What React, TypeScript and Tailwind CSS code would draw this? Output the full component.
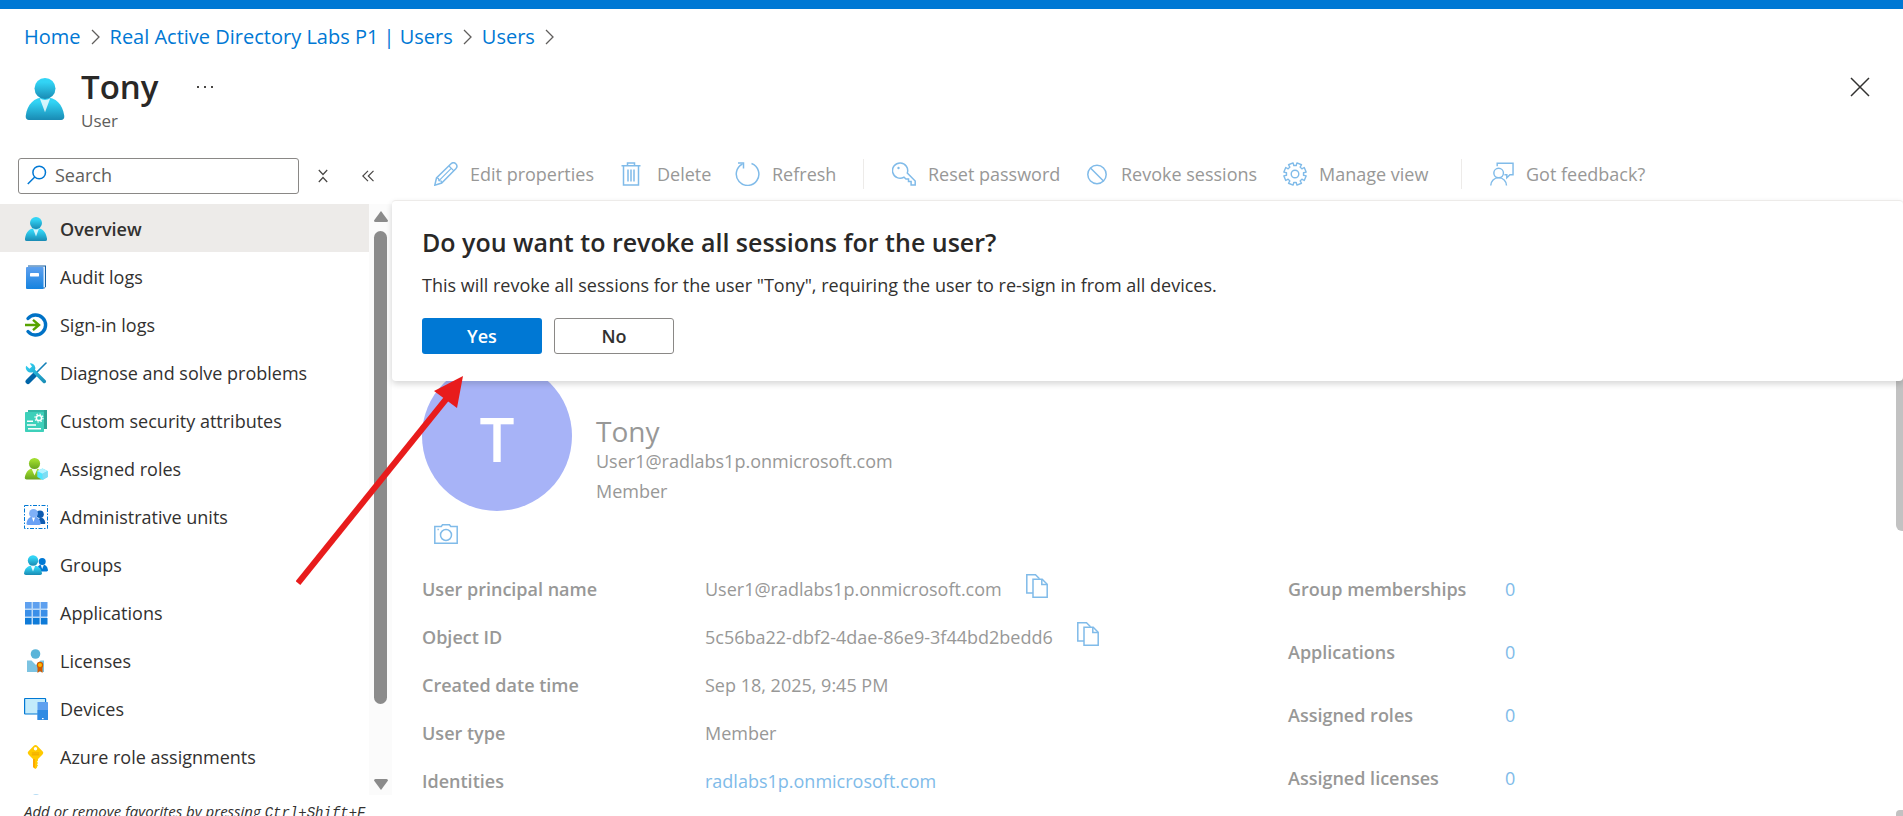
import React from "react";

const BLUE = "#0078d4";

type IconProps = { className?: string };

function PersonIcon({ className }: IconProps) {
  return (
    <svg viewBox="0 0 24 24" className={className} aria-hidden="true">
      <defs>
        <linearGradient id="personHead" x1="0" y1="0" x2="0" y2="1">
          <stop offset="0.2" stopColor="#32d4f5" />
          <stop offset="1" stopColor="#198ab3" />
        </linearGradient>
        <linearGradient id="personBody" x1="0" y1="0" x2="0" y2="1">
          <stop offset="0.2" stopColor="#32d4f5" />
          <stop offset="1" stopColor="#198ab3" />
        </linearGradient>
      </defs>
      <path d="M21.200 24a1.800 1.800 0 0 0 1.800-2v-.5C22 15 18.400 11 12 11S2 15 1 21.500v.5a1.800 1.800 0 0 0 1.800 2z" fill="url(#personBody)" />
      <path d="M12 12.500a6 6 0 0 1-3-.9L12 19.600l3-8a6 6 0 0 1-3 .9z" fill="#fff" opacity="0.8" />
      <circle cx="12" cy="6" r="6" fill="url(#personHead)" />
    </svg>
  );
}

function BookIcon() {
  return (
    <svg viewBox="0 0 24 24" className="size-6" aria-hidden="true">
      <defs>
        <linearGradient id="book" x1="0" y1="0" x2="0" y2="1">
          <stop offset="0" stopColor="#5ea0ef" />
          <stop offset="1" stopColor="#1583df" />
        </linearGradient>
      </defs>
      <path d="M4 .5h18v21l-1.500 2H4z" fill="#155ea1" />
      <path d="M4 1.500h17v21H4z" fill="#e3effa" />
      <rect x="2" y="2" width="17.500" height="22" rx="1" fill="url(#book)" />
      <rect x="6" y="8" width="9" height="3.500" rx=".4" fill="#fff" />
    </svg>
  );
}

function SignInIcon() {
  return (
    <svg viewBox="0 0 24 24" className="size-6" fill="none" aria-hidden="true">
      <path d="M4 5.500A10 10 0 1 1 4 18.500" stroke="#0072c6" strokeWidth="3.400" strokeLinecap="round" />
      <path d="M1 12h14M9 6.800l6 5.200-6 5.200" stroke="#57a300" strokeWidth="2.400" />
    </svg>
  );
}

function ToolsIcon() {
  return (
    <svg viewBox="0 0 24 24" className="size-6" fill="none" aria-hidden="true">
      <defs>
        <linearGradient id="wrench" x1="0" y1="0" x2="1" y2="1">
          <stop offset="0" stopColor="#32d4f5" />
          <stop offset="1" stopColor="#198ab3" />
        </linearGradient>
      </defs>
      <path d="M22 2 11 13" stroke="#1480b8" strokeWidth="1.600" strokeLinecap="round" />
      <path d="M11 13.500 4 20.500" stroke="#0065a8" strokeWidth="5" strokeLinecap="round" />
      <path d="M7 2.200a5 5 0 0 1 4 6.600l10.600 10.400c1.600 1.600-.9 4.200-2.600 2.600L8.600 11.200A5 5 0 0 1 1.800 6l.4-1.200 3.300 3 2.500-2.300L5.800 2.400z" fill="url(#wrench)" />
    </svg>
  );
}

function AttributesIcon() {
  return (
    <svg viewBox="0 0 24 24" className="size-6" aria-hidden="true">
      <path d="M4 1h19v19h-3L4 4z" fill="#2fa593" />
      <path d="M4 1h16v4H4z" fill="#34b8a6" />
      <rect x="1" y="3" width="19" height="20" rx=".8" fill="#3dd0ba" />
      <g fill="none" stroke="#fff">
        <circle cx="15" cy="9" r="2.600" strokeWidth="1.500" />
        <circle cx="15" cy="9" r="4" strokeWidth="1.200" strokeDasharray="1.400 1.740" />
        <path d="M3 12.200h6M3 16h9M4 19.800h13" strokeWidth="1.500" />
      </g>
    </svg>
  );
}

function RolesIcon() {
  return (
    <svg viewBox="0 0 24 24" className="size-6" aria-hidden="true">
      <defs>
        <linearGradient id="role" x1="0" y1="0" x2="0" y2="1">
          <stop offset="0.2" stopColor="#9fdb2e" />
          <stop offset="1" stopColor="#68a41f" />
        </linearGradient>
      </defs>
      <path d="M17 22.500c1 0 2-1 1.800-2C18 14.500 15.300 11 10.300 11S2 14.500.8 20.500c-.2 1 .7 2 1.900 2z" fill="url(#role)" />
      <path d="m7.300 11 3.200 7.500 3.200-7.500z" fill="#fff" opacity="0.9" />
      <circle cx="10.500" cy="6.500" r="5.600" fill="url(#role)" />
      <path d="m18.500 11.500 5.200 2.600v6l-5.200 3-5.200-3v-6z" fill="#50e6ff" />
      <path d="m18.500 11.500 5.200 2.600-5.200 2.700-5.200-2.700z" fill="#b5f3ff" />
      <path d="m18.500 16.800 5.200-2.700v6l-5.200 3z" fill="#7fdcf2" />
    </svg>
  );
}

function AdminUnitsIcon() {
  return (
    <svg viewBox="0 0 24 24" className="size-6" aria-hidden="true">
      <rect x=".5" y=".5" width="23" height="23" fill="none" stroke={BLUE} strokeDasharray="4 1.500 1.500 1.500" />
      <circle cx="16" cy="9.200" r="3.800" fill="#0f5cb0" />
      <path d="M12 19h8.200c1 0 1.300-.7 1.100-1.500-.6-3.500-2.300-5-5.300-5z" fill="#0f5cb0" />
      <path d="M3.800 20c-1 0-1.500-.8-1.300-1.700C3.200 14 5.500 11.500 9.500 11.500s6.500 2.500 7.200 6.800c.2 1-.4 1.700-1.300 1.700z" fill="#6aa2f5" />
      <path d="m7.800 12 1.700 5 1.700-5z" fill="#fff" />
      <circle cx="9.500" cy="8.400" r="4.400" fill="#7fb0f7" />
    </svg>
  );
}

function GroupsIcon() {
  return (
    <svg viewBox="0 0 24 24" className="size-6" aria-hidden="true">
      <defs>
        <linearGradient id="group" x1="0" y1="0" x2="0" y2="1">
          <stop offset="0.2" stopColor="#32d4f5" />
          <stop offset="1" stopColor="#198ab3" />
        </linearGradient>
      </defs>
      <path d="M14 18.500h8.700c.8 0 1.400-.7 1.300-1.500-.6-3.700-2.500-5.500-6-5.500-2.500 0-4 1.500-4.500 3.500z" fill={BLUE} />
      <path d="m16.500 11.500 1.700 4.500 1.800-4.500z" fill="#fff" opacity="0.9" />
      <circle cx="18.200" cy="8.500" r="3.500" fill={BLUE} />
      <path d="M1.800 22C.7 22-.1 21.200 0 20.200.9 15 4 12.500 9 12.500s8.100 2.500 9 7.700c.1 1-.7 1.800-1.800 1.800z" fill="url(#group)" />
      <path d="M6.500 12 9 18.500l2.500-6.500z" fill="#fff" opacity="0.9" />
      <circle cx="9" cy="7.500" r="5.200" fill="url(#group)" />
    </svg>
  );
}

function AppsIcon() {
  const rows = [
    ["#5ea0ef", 1],
    ["#3b8fe8", 9],
    ["#0f7bd8", 17],
  ] as const;
  return (
    <svg viewBox="0 0 24 24" className="size-6" aria-hidden="true">
      <rect x="1" y="1" width="22" height="22" fill="#b9d8f7" />
      {rows.map(([fill, y]) =>
        [1, 9, 17].map((x) => <rect key={`${x}-${y}`} x={x} y={y} width="6.500" height="6.500" fill={fill} />)
      )}
    </svg>
  );
}

function LicensesIcon() {
  return (
    <svg viewBox="0 0 24 24" className="size-6" aria-hidden="true">
      <path d="M3 11.500h4.500L12 16l4.500-4.500H20V23H3z" fill="#7cc3e1" />
      <circle cx="11.500" cy="5" r="4.800" fill="#59b4d9" />
      <path d="M13.500 17h5v7L16 22l-2.500 2z" fill="#d15a00" />
      <circle cx="16" cy="16" r="3.200" fill="#d15a00" />
      <circle cx="16" cy="16" r="2" fill="#ffb700" />
    </svg>
  );
}

function DevicesIcon() {
  return (
    <svg viewBox="0 0 24 24" className="size-6" aria-hidden="true">
      <rect x=".6" y="1.500" width="21" height="15.500" rx=".5" fill="#c3ebfb" stroke={BLUE} strokeWidth="1.200" />
      <rect x="13.500" y="5" width="10.500" height="18" rx=".6" fill="#5ea0ef" />
      <path d="M13.500 13H24v9.400a.6.6 0 0 1-.6.6h-9.300a.6.6 0 0 1-.6-.6z" fill="#2f8be3" />
      <rect x="18" y="21" width="1.600" height="1.200" fill="#fff" />
    </svg>
  );
}

function GoldKeyIcon() {
  return (
    <svg viewBox="0 0 24 24" className="size-6" aria-hidden="true">
      <path d="M11.500 0c.7 0 1.200.3 1.700.8l5.300 5.400c1 1 1 2.200 0 3.200L14 14v1.500l-1 1.200 1 1.300-1 1.300 1 1.200-1 1.300v.7L11.500 24 9 22v-8L4.500 9.400c-1-1-1-2.200 0-3.200L9.800.8c.5-.5 1-.8 1.700-.8z" fill="#ffca00" />
      <path d="M9 14h2v9.500L9 22z" fill="#ffa800" />
      <circle cx="11.500" cy="3.700" r="1.700" fill="#fff" />
      <path d="M7.800 8h7.500M7.800 9.800h7.500" stroke="#e89e00" strokeWidth=".8" />
    </svg>
  );
}

function PencilIcon() {
  return (
    <svg viewBox="0 0 24 24" className="size-6" fill="none" stroke="currentColor" strokeWidth="1.500" aria-hidden="true">
      <path d="M.8 23.200 2.500 16 17 1.800a3.100 3.100 0 0 1 4.800 0c1.400 1.400 1.400 3.400 0 4.900L7.700 21z" />
      <path d="m15 4 4.900 4.900M2.500 16l2 .5.400 2.300 2.300.2.500 2M17 6.700 5 18.700" strokeWidth="1.200" />
    </svg>
  );
}

function TrashIcon() {
  return (
    <svg viewBox="0 0 24 24" className="size-6" fill="none" stroke="currentColor" strokeWidth="1.500" aria-hidden="true">
      <path d="M.5 3.800h19M6.500 3.500V1h7v2.500M2.500 4v19h15V4M7 7.500v12M10 7.500v12M13 7.500v12" />
    </svg>
  );
}

function RefreshIcon() {
  return (
    <svg viewBox="0 0 25 24" className="h-6 w-[25px]" fill="none" stroke="currentColor" strokeWidth="1.500" aria-hidden="true">
      <path d="M16.500 1.500A11.300 11.300 0 1 1 7.500 2" />
      <path d="M3 .9h5.500v5.600" />
    </svg>
  );
}

function KeyIcon() {
  return (
    <svg viewBox="0 0 24 24" className="size-6" fill="none" stroke="currentColor" strokeWidth="1.500" aria-hidden="true">
      <path d="M15.300 11A7.600 7.600 0 1 0 12 15.100l2 2h2.500v2.500h2.600V23h4.100v-4z" />
      <circle cx="6.500" cy="6" r="1.200" fill="currentColor" stroke="none" />
    </svg>
  );
}

function BlockIcon() {
  return (
    <svg viewBox="0 0 24 24" className="size-6" fill="none" stroke="currentColor" strokeWidth="1.500" aria-hidden="true">
      <circle cx="12" cy="12.500" r="9.200" />
      <path d="m5.500 6 13 13" />
    </svg>
  );
}

function GearIcon() {
  const teeth = 8;
  const pts: string[] = [];
  for (let i = 0; i < teeth; i++) {
    const base = ((i + 0.5) * 2 * Math.PI) / teeth - Math.PI / 2;
    (
      [
        [-0.25, 8.6],
        [-0.22, 11.3],
        [0.22, 11.3],
        [0.25, 8.6],
      ] as const
    ).forEach(([a, r]) => pts.push(`${(12 + r * Math.cos(base + a)).toFixed(2)},${(12 + r * Math.sin(base + a)).toFixed(2)}`));
  }
  return (
    <svg viewBox="0 0 24 24" className="size-6" fill="none" stroke="currentColor" strokeWidth="1.400" strokeLinejoin="round" aria-hidden="true">
      <polygon points={pts.join(" ")} />
      <circle cx="12" cy="12" r="3.800" />
    </svg>
  );
}

function FeedbackIcon() {
  return (
    <svg viewBox="0 0 25 24" className="h-6 w-6" fill="none" stroke="currentColor" strokeWidth="1.500" aria-hidden="true">
      <path d="M7.500 4V.8H24v12h-3.200L17.500 16v-3.200H15" />
      <circle cx="9" cy="11" r="5" />
      <path d="M.8 24a8.200 8.200 0 0 1 16.400 0" />
    </svg>
  );
}

function CopyIcon() {
  return (
    <svg viewBox="0 0 22 24" className="h-6 w-[22px]" fill="none" stroke="currentColor" strokeWidth="1.500" aria-hidden="true">
      <path d="M7 19H.8V.8h8.700l4 4" />
      <path d="M7 5.300h9.200l5 5V23.200H7z" />
      <path d="M15.800 5.500v5h5.200" />
    </svg>
  );
}

function CameraIcon() {
  return (
    <svg viewBox="0 0 24 20" className="h-5 w-6" fill="none" stroke="currentColor" strokeWidth="1.500" aria-hidden="true">
      <path d="M.8 19.200V2.500h6.500L8.500.8h7l1.200 1.700h6.500v16.700z" />
      <circle cx="12" cy="11" r="5.500" />
      <path d="M3.500 5.500h1.300" />
    </svg>
  );
}

function Chevron() {
  return (
    <svg viewBox="0 0 9 16" className="h-4 w-[9px]" fill="none" stroke="#605e5c" strokeWidth="1.300" aria-hidden="true">
      <path d="m1 1 7 7-7 7" />
    </svg>
  );
}

const menu = [
  { label: "Overview", icon: <PersonIcon className="size-6" /> },
  { label: "Audit logs", icon: <BookIcon /> },
  { label: "Sign-in logs", icon: <SignInIcon /> },
  { label: "Diagnose and solve problems", icon: <ToolsIcon /> },
  { label: "Custom security attributes", icon: <AttributesIcon /> },
  { label: "Assigned roles", icon: <RolesIcon /> },
  { label: "Administrative units", icon: <AdminUnitsIcon /> },
  { label: "Groups", icon: <GroupsIcon /> },
  { label: "Applications", icon: <AppsIcon /> },
  { label: "Licenses", icon: <LicensesIcon /> },
  { label: "Devices", icon: <DevicesIcon /> },
  { label: "Azure role assignments", icon: <GoldKeyIcon /> },
];

const counts = ["Group memberships", "Applications", "Assigned roles", "Assigned licenses"];

const details: { label: string; value: string; copy?: boolean; link?: boolean }[] = [
  { label: "User principal name", value: "User1@radlabs1p.onmicrosoft.com", copy: true },
  { label: "Object ID", value: "5c56ba22-dbf2-4dae-86e9-3f44bd2bedd6", copy: true },
  { label: "Created date time", value: "Sep 18, 2025, 9:45 PM" },
  { label: "User type", value: "Member" },
  { label: "Identities", value: "radlabs1p.onmicrosoft.com", link: true },
];

function Command({ icon, label, width }: { icon: React.ReactNode; label: string; width: string }) {
  return (
    <button type="button" disabled className={`flex h-9 shrink-0 items-center gap-3 whitespace-nowrap text-[#989897] ${width}`}>
      <span className="text-[#80bbe9]">{icon}</span>
      {label}
    </button>
  );
}

function Sidebar() {
  return (
    <aside className="flex w-[392px] shrink-0 flex-col">
      <div className="flex h-[46px] shrink-0 items-start pl-[18px]">
        <label className="flex h-9 w-[281px] items-center gap-2 rounded-[3px] border border-[#8a8886] px-2 pb-0.5">
          <svg viewBox="0 0 20 20" className="size-5" fill="none" stroke={BLUE} strokeWidth="1.500" aria-hidden="true">
            <circle cx="12.200" cy="7.500" r="6.300" />
            <path d="M7.800 12 .8 19" />
          </svg>
          <input aria-label="Search" placeholder="Search" className="min-w-0 flex-1 outline-none placeholder:text-[#605e5c]" />
        </label>
        <button type="button" aria-label="Collapse groups" className="ml-4 flex h-9 w-4 items-center justify-center">
          <svg viewBox="0 0 10 14" className="h-3.5 w-2.5" fill="none" stroke="#484644" strokeWidth="1.200" aria-hidden="true">
            <path d="m.8 1 4.200 4.500L9.200 1M.8 13 5 8.500 9.200 13" />
          </svg>
        </button>
        <button type="button" aria-label="Collapse menu" className="ml-[27px] flex h-9 w-5 items-center justify-center">
          <svg viewBox="0 0 12 12" className="size-3" fill="none" stroke="#484644" strokeWidth="1.200" aria-hidden="true">
            <path d="M6 .8.800 6 6 11.200M11.500.8 6.300 6l5.200 5.200" />
          </svg>
        </button>
      </div>
      <div className="flex min-h-0 flex-1">
        <nav className="min-w-0 flex-1 overflow-hidden">
          {menu.map((m, i) => (
            <a
              key={m.label}
              href="#"
              className={`flex h-12 items-center gap-3 pt-0.5 pl-6 text-[#323130] ${i === 0 ? "bg-[#edebe9] font-semibold" : ""}`}
            >
              {m.icon}
              {m.label}
            </a>
          ))}
          <div className="flex h-12 pt-3.5 pl-6">
            <span className="ml-2 size-2 rounded-full bg-[#b5dcf5]" />
          </div>
        </nav>
        <div className="flex w-[23px] flex-col items-center bg-[#fbfbfb] pt-[7px] pb-[5px]">
          <svg viewBox="0 0 14 11" className="h-[11px] w-3.5 shrink-0" fill="#8b8b8b" aria-hidden="true">
            <path d="M7 0 14 9.500Q14 11 12.500 11h-11Q0 11 0 9.500z" />
          </svg>
          <div className="mt-[9px] w-[13px] flex-[472] rounded-full bg-[#8b8b8b]" />
          <div className="flex-[75]" />
          <svg viewBox="0 0 14 11" className="h-[11px] w-3.5 shrink-0" fill="#8b8b8b" aria-hidden="true">
            <path d="M7 11 0 1.500Q0 0 1.500 0h11Q14 0 14 1.500z" />
          </svg>
        </div>
      </div>
      <p className="h-[21px] shrink-0 pt-1 pl-6 text-[15px] leading-6 whitespace-nowrap text-[#323130] italic">
        Add or remove favorites by pressing <kbd className="font-['Liberation_Mono',monospace] text-[14px]">Ctrl+Shift+F</kbd>
      </p>
    </aside>
  );
}

function Prompt() {
  return (
    <section
      role="dialog"
      aria-labelledby="prompt-title"
      className="absolute inset-x-0 top-0 z-10 rounded border-t border-[#edebe9] bg-white pt-[23px] pb-[27px] pl-[30px] shadow-[0_3px_6px_rgba(0,0,0,0.16)]"
    >
      <h2 id="prompt-title" className="text-[25px] leading-9 font-semibold text-[#292827]">
        Do you want to revoke all sessions for the user?
      </h2>
      <p className="mt-[13px] leading-6 text-[#323130]">
        This will revoke all sessions for the user "Tony", requiring the user to re-sign in from all devices.
      </p>
      <div className="mt-[21px] flex gap-3 font-semibold">
        <button type="button" className="h-9 w-[120px] rounded-[3px] bg-[#0078d4] text-white">
          Yes
        </button>
        <button type="button" className="h-9 w-[120px] rounded-[3px] border border-[#8a8886] bg-white text-[#323130]">
          No
        </button>
      </div>
    </section>
  );
}

export default function App() {
  return (
    <div className="relative flex h-screen flex-col overflow-hidden border-t-9 border-[#0078d4] bg-white font-['Open_Sans','Noto_Sans',sans-serif] text-[18px] text-[#323130]">
      <nav aria-label="Breadcrumb" className="flex h-14 shrink-0 items-center gap-2.5 pl-6 text-[20px] text-[#0078d4]">
        <a href="#">Home</a>
        <Chevron />
        <a href="#">Real Active Directory Labs P1 | Users</a>
        <Chevron />
        <a href="#">Users</a>
        <Chevron />
      </nav>
      <header className="flex h-[93px] shrink-0 items-start pr-[33px] pl-6">
        <PersonIcon className="mt-[13px] h-[42px] w-[42px]" />
        <div className="ml-[15px]">
          <h1 className="text-[33px] leading-[44px] font-semibold text-[#292827]">Tony</h1>
          <p className="text-[17px] leading-6 text-[#605e5c]">User</p>
        </div>
        <button type="button" aria-label="More" className="mt-3.5 ml-[37px] flex h-4 w-5 items-center justify-between px-0.5">
          <span className="size-0.5 bg-[#484644]" />
          <span className="size-0.5 bg-[#484644]" />
          <span className="size-0.5 bg-[#484644]" />
        </button>
        <button type="button" aria-label="Close" className="mt-3 ml-auto">
          <svg viewBox="0 0 20 20" className="size-5" fill="none" stroke="#323130" strokeWidth="1.500" aria-hidden="true">
            <path d="m1 1 18 18M19 1 1 19" />
          </svg>
        </button>
      </header>
      <div className="flex min-h-0 flex-1">
        <Sidebar />
        <main className="flex min-w-0 flex-1 flex-col">
          <div role="toolbar" aria-label="Commands" className="flex h-[42px] shrink-0 items-start pl-[42px]">
            <div className="flex h-8 items-center">
              <Command icon={<PencilIcon />} label="Edit properties" width="w-[187px]" />
              <Command icon={<TrashIcon />} label="Delete" width="w-[114px]" />
              <Command icon={<RefreshIcon />} label="Refresh" width="w-[128px]" />
              <span className="mr-7 h-[30px] w-px bg-[#edebe9]" />
              <Command icon={<KeyIcon />} label="Reset password" width="w-[193px]" />
              <Command icon={<BlockIcon />} label="Revoke sessions" width="w-[198px]" />
              <Command icon={<GearIcon />} label="Manage view" width="w-[178px]" />
              <span className="mr-7 h-[30px] w-px bg-[#edebe9]" />
              <Command icon={<FeedbackIcon />} label="Got feedback?" width="w-[170px]" />
            </div>
          </div>
          <div className="relative min-h-0 flex-1">
            <Prompt />
            <div className="flex h-full overflow-hidden">
              <div className="min-w-0 flex-1 pt-[161px] pl-[30px] text-[#989897]">
                <div className="flex gap-6">
                  <div className="flex size-[150px] items-center justify-center rounded-full bg-[#a7b3f7] pt-1 text-[62px] font-semibold text-white">
                    T
                  </div>
                  <div className="pt-[51px]">
                    <h2 className="text-[28px] leading-[38px]">Tony</h2>
                    <p className="leading-[22px]">User1@radlabs1p.onmicrosoft.com</p>
                    <p className="mt-2 leading-[22px]">Member</p>
                  </div>
                </div>
                <button type="button" aria-label="Change photo" className="mt-[13px] ml-3 block text-[#80bbe9]">
                  <CameraIcon />
                </button>
                <div className="mt-[21px] flex">
                  <dl className="w-[866px]">
                    {details.map((d) => (
                      <div key={d.label} className="flex h-12 items-center">
                        <dt className="w-[283px] font-semibold">{d.label}</dt>
                        <dd className="flex items-center gap-6">
                          {d.link ? (
                            <a href="#" className="text-[#80bbe9]">
                              {d.value}
                            </a>
                          ) : (
                            d.value
                          )}
                          {d.copy && (
                            <button type="button" aria-label={`Copy ${d.label}`} className="-mt-1.5 text-[#80bbe9]">
                              <CopyIcon />
                            </button>
                          )}
                        </dd>
                      </div>
                    ))}
                  </dl>
                  <dl className="flex flex-col gap-[15px]">
                    {counts.map((c) => (
                      <div key={c} className="flex h-12 items-center">
                        <dt className="w-[217px] font-semibold">{c}</dt>
                        <dd>
                          <a href="#" className="text-[#80bbe9]">
                            0
                          </a>
                        </dd>
                      </div>
                    ))}
                  </dl>
                </div>
              </div>
              <div className="flex w-[7px] flex-col justify-between pt-[161px]">
                <div className="h-[170px] rounded-bl-md bg-[#c2c2c2]" />
                <div className="h-1.5 rounded-tl bg-[#c2c2c2]" />
              </div>
            </div>
          </div>
        </main>
      </div>
      <svg viewBox="0 0 168 210" className="pointer-events-none absolute top-[366px] left-[296px] z-20 h-[210px] w-[168px]" aria-hidden="true">
        <path d="M2 208 151 23" stroke="#e81c1c" strokeWidth="6" />
        <path d="M167 1 138 16l23 17z" fill="#e81c1c" />
      </svg>
    </div>
  );
}
